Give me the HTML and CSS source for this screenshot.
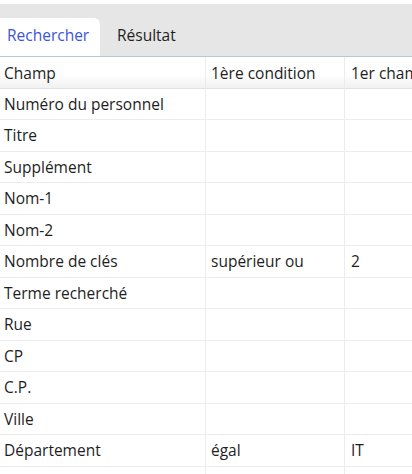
FILE: index.html
```html
<!DOCTYPE html>
<html lang="fr">
<head>
<meta charset="utf-8">
<link rel="stylesheet" href="styles.css">
</head>
<body>
<div class="tabbar">
  <div class="tab active">Rechercher</div>
  <div class="tab">Résultat</div>
</div>
<div class="viewport">
<div class="grid">
  <div class="hcell">Champ</div><div class="hcell">1ère condition</div><div class="hcell">1er champ</div>
  <div class="cell">Numéro du personnel</div><div class="cell"></div><div class="cell"></div>
  <div class="cell">Titre</div><div class="cell"></div><div class="cell"></div>
  <div class="cell">Supplément</div><div class="cell"></div><div class="cell"></div>
  <div class="cell">Nom-1</div><div class="cell"></div><div class="cell"></div>
  <div class="cell">Nom-2</div><div class="cell"></div><div class="cell"></div>
  <div class="cell">Nombre de clés</div><div class="cell">supérieur ou</div><div class="cell">2</div>
  <div class="cell">Terme recherché</div><div class="cell"></div><div class="cell"></div>
  <div class="cell">Rue</div><div class="cell"></div><div class="cell"></div>
  <div class="cell">CP</div><div class="cell"></div><div class="cell"></div>
  <div class="cell">C.P.</div><div class="cell"></div><div class="cell"></div>
  <div class="cell">Ville</div><div class="cell"></div><div class="cell"></div>
  <div class="cell">Département</div><div class="cell">égal</div><div class="cell">IT</div>
  <div class="cell"></div><div class="cell"></div><div class="cell"></div>
</div>
</div>
</body>
</html>
```
FILE: styles.css
```css
html, body {
  margin: 0;
  padding: 0;
  background: #ffffff;
  overflow: hidden;
}
body {
  font-family: "Open Sans", "Noto Sans", sans-serif;
  font-size: 15.5px;
  font-weight: 500;
  color: #1e1e1e;
  width: 412px;
  height: 474px;
  padding-top: 4px;
  box-sizing: border-box;
}
.tabbar {
  background: #e6e6e6;
  height: 52px;
  display: flex;
  align-items: flex-end;
  border-bottom: 1px solid #b8c7d8;
}
.tab {
  height: 38px;
  display: flex;
  align-items: center;
  padding: 0 11px 4px 7px;
  box-sizing: border-box;
  white-space: nowrap;
}
.tab.active {
  background: #ffffff;
  color: #3b55d9;
  width: 100px;
  border-top-right-radius: 6px;
}
.tab + .tab {
  padding-left: 17px;
}
.viewport {
  width: 412px;
  height: 417px;
  overflow: hidden;
}
.grid {
  display: grid;
  grid-template-columns: 206px 139px 120px;
  grid-auto-rows: 31.5px;
  width: 465px;
}
.hcell, .cell {
  border-right: 1px solid #ececec;
  border-bottom: 1px solid #ececec;
  padding-left: 5px;
  display: flex;
  align-items: center;
  white-space: nowrap;
  overflow: hidden;
  box-sizing: border-box;
}
.hcell {
  height: 32px;
  background: linear-gradient(#ffffff 0%, #ffffff 55%, #f1f1f1 100%);
  border-bottom: 1px solid #e2e2e2;
}
.grid > :nth-child(3n+1) {
  padding-left: 4px;
}
.grid > :nth-child(3n) {
  padding-left: 6px;
}
```
